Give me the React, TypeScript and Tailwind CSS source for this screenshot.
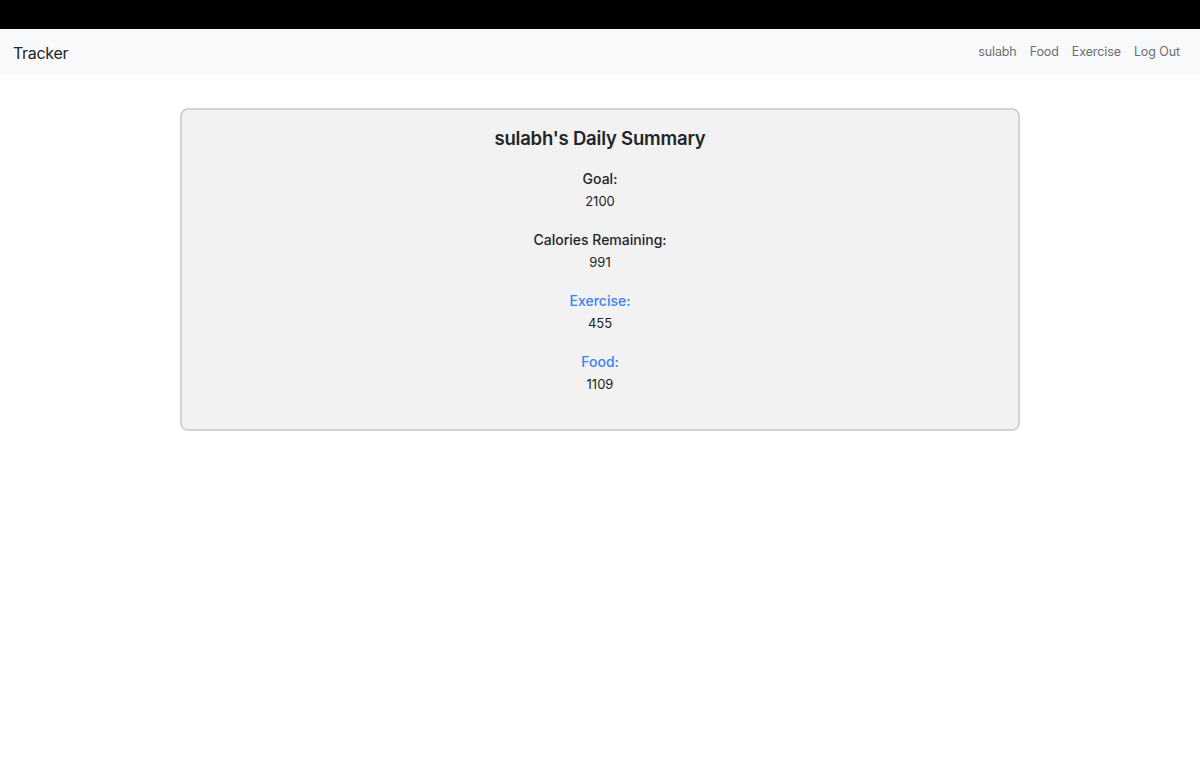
const NAV_LINKS = ['sulabh', 'Food', 'Exercise', 'Log Out'];

const STATS: { label: string; value: string; accent?: boolean }[] = [
  { label: 'Goal:', value: '2100' },
  { label: 'Calories Remaining:', value: '991' },
  { label: 'Exercise:', value: '455', accent: true },
  { label: 'Food:', value: '1109', accent: true },
];

export default function App() {
  return (
    <div className="min-h-[780px] bg-white font-['Inter','Liberation_Sans',sans-serif] text-[#212529]">
      <div className="h-[29px] bg-black" />
      <nav className="flex h-[46px] items-center justify-between bg-[#f8f9fa] pl-[13px] pr-[20px] pt-[1px]">
        <span className="text-[16px] tracking-[-0.3px]">Tracker</span>
        <div className="flex gap-[13px] text-[12.5px] tracking-[-0.1px] text-[#6c6f73]">
          {NAV_LINKS.map((l) => (
            <span key={l}>{l}</span>
          ))}
        </div>
      </nav>

      <div className="flex justify-center pt-[33px]">
        <div className="flex w-[840px] flex-col items-center rounded-[8px] border-2 border-[#d2d3d2] bg-[#f1f2f1] pt-[14px] pb-[34px]">
          <h2 className="text-[18.5px] font-semibold leading-[28px] tracking-[-0.2px]">
            sulabh's Daily Summary
          </h2>
          <div className="mt-[16px] flex flex-col items-center gap-[17px]">
            {STATS.map((s) => (
              <div key={s.label} className="flex flex-col items-center">
                <div
                  className={`text-[14px] font-medium leading-[22px] ${
                    s.accent ? 'text-[#3b82f6]' : 'text-[#212529]'
                  }`}
                >
                  {s.label}
                </div>
                <div className="text-[13px] leading-[22px]">{s.value}</div>
              </div>
            ))}
          </div>
        </div>
      </div>
    </div>
  );
}
